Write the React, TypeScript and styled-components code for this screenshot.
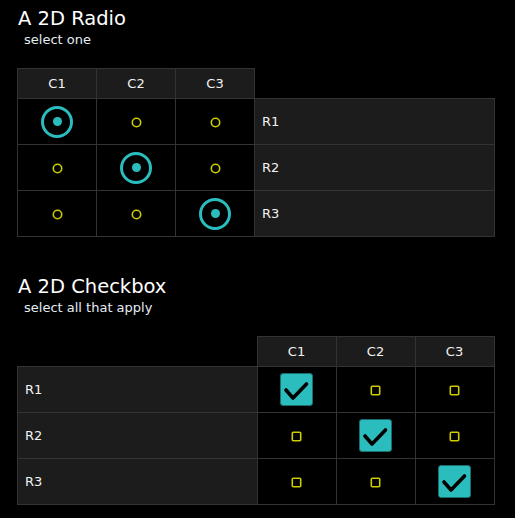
import React, { useState } from 'react';
import styled, { createGlobalStyle } from 'styled-components';

const GlobalStyle = createGlobalStyle`
    body {
        margin: 0;
        background: #000;
        color: #f2f2f2;
        font-family: "Comic Sans MS", "DejaVu Sans", sans-serif;
    }
`;

const Page = styled.div`
    padding: 6px 17px 0 17px;
`;

const Section = styled.section<{ gap?: number }>`
    margin-top: ${({ gap }) => gap ?? 0}px;
`;

const Titulo = styled.h2`
    margin: 0 0 0 1px;
    font-size: 19.5px;
    font-weight: normal;
    line-height: 26px;
    color: #fff;
`;

const Subtitulo = styled.div`
    margin: 0 0 0 7px;
    font-size: 13px;
    line-height: 16px;
    color: #e4ecf4;
`;

const Tabela = styled.table`
    margin-top: 20px;
    border-collapse: collapse;
    table-layout: fixed;
`;

const Cabecalho = styled.th<{ vazio?: boolean; largura?: number }>`
    width: ${({ largura }) => largura ?? 78}px;
    height: 29px;
    padding: 0;
    font-size: 13px;
    font-weight: normal;
    background: ${({ vazio }) => (vazio ? 'transparent' : '#1c1c1c')};
    border: ${({ vazio }) => (vazio ? 'none' : '1px solid #333')};
`;

const Rotulo = styled.td`
    height: 45px;
    padding: 0 0 0 7px;
    font-size: 13px;
    background: #1c1c1c;
    border: 1px solid #333;
`;

const Celula = styled.td`
    height: 45px;
    padding: 0;
    text-align: center;
    vertical-align: middle;
    border: 1px solid #333;
    cursor: pointer;

    svg {
        display: inline-block;
        vertical-align: middle;
    }
`;

const RadioMarcado = styled.span`
    display: inline-flex;
    align-items: center;
    justify-content: center;
    box-sizing: border-box;
    width: 32px;
    height: 32px;
    border: 3px solid #2bbdbd;
    border-radius: 50%;
    vertical-align: middle;

    &::after {
        content: '';
        width: 9px;
        height: 9px;
        border-radius: 50%;
        background: #2bbdbd;
    }
`;

const CaixaMarcada = styled.span`
    display: inline-flex;
    align-items: center;
    justify-content: center;
    box-sizing: border-box;
    width: 33px;
    height: 33px;
    background: #2bbdbd;
    border: 1px solid #1a6e6e;
    border-radius: 3px;
    vertical-align: middle;
`;

const colunas = ['C1', 'C2', 'C3'];
const linhas = ['R1', 'R2', 'R3'];

const RadioVazio = () => (
    <svg width="11" height="11" viewBox="0 0 11 11">
        <circle cx="5.5" cy="5.5" r="4.2" fill="none" stroke="#cccc00" strokeWidth="1.6" />
    </svg>
);

const CaixaVazia = () => (
    <svg width="11" height="11" viewBox="0 0 11 11">
        <rect x="1.3" y="1.3" width="8.4" height="8.4" rx="1" fill="none" stroke="#cccc00" strokeWidth="1.6" />
    </svg>
);

const Check = () => (
    <svg width="31" height="31" viewBox="0 0 31 31">
        <path d="M5 16 L12 24 L25.5 10" fill="none" stroke="#000" strokeWidth="3.6" strokeLinecap="round" strokeLinejoin="round" />
    </svg>
);

const App: React.FC = () => {
    const [radio, setRadio] = useState<Record<number, number>>({ 0: 0, 1: 1, 2: 2 });
    const [marcados, setMarcados] = useState<Record<string, boolean>>({ '0-0': true, '1-1': true, '2-2': true });

    const alternar = (chave: string) => {
        setMarcados((prev) => ({ ...prev, [chave]: !prev[chave] }));
    };

    return (
        <Page>
            <GlobalStyle />
            <Section>
                <Titulo>A 2D Radio</Titulo>
                <Subtitulo>select one</Subtitulo>
                <Tabela>
                    <thead>
                        <tr>
                            {colunas.map((c) => (
                                <Cabecalho key={c}>{c}</Cabecalho>
                            ))}
                            <Cabecalho vazio largura={239} />
                        </tr>
                    </thead>
                    <tbody>
                        {linhas.map((r, i) => (
                            <tr key={r}>
                                {colunas.map((c, j) => (
                                    <Celula key={c} onClick={() => setRadio((prev) => ({ ...prev, [i]: j }))}>
                                        {radio[i] === j ? <RadioMarcado /> : <RadioVazio />}
                                    </Celula>
                                ))}
                                <Rotulo>{r}</Rotulo>
                            </tr>
                        ))}
                    </tbody>
                </Tabela>
            </Section>

            <Section gap={37}>
                <Titulo>A 2D Checkbox</Titulo>
                <Subtitulo>select all that apply</Subtitulo>
                <Tabela>
                    <thead>
                        <tr>
                            <Cabecalho vazio largura={239} />
                            {colunas.map((c) => (
                                <Cabecalho key={c}>{c}</Cabecalho>
                            ))}
                        </tr>
                    </thead>
                    <tbody>
                        {linhas.map((r, i) => (
                            <tr key={r}>
                                <Rotulo>{r}</Rotulo>
                                {colunas.map((c, j) => {
                                    const chave = `${i}-${j}`;
                                    return (
                                        <Celula key={c} onClick={() => alternar(chave)}>
                                            {marcados[chave] ? (
                                                <CaixaMarcada>
                                                    <Check />
                                                </CaixaMarcada>
                                            ) : (
                                                <CaixaVazia />
                                            )}
                                        </Celula>
                                    );
                                })}
                            </tr>
                        ))}
                    </tbody>
                </Tabela>
            </Section>
        </Page>
    );
};

export default App;
